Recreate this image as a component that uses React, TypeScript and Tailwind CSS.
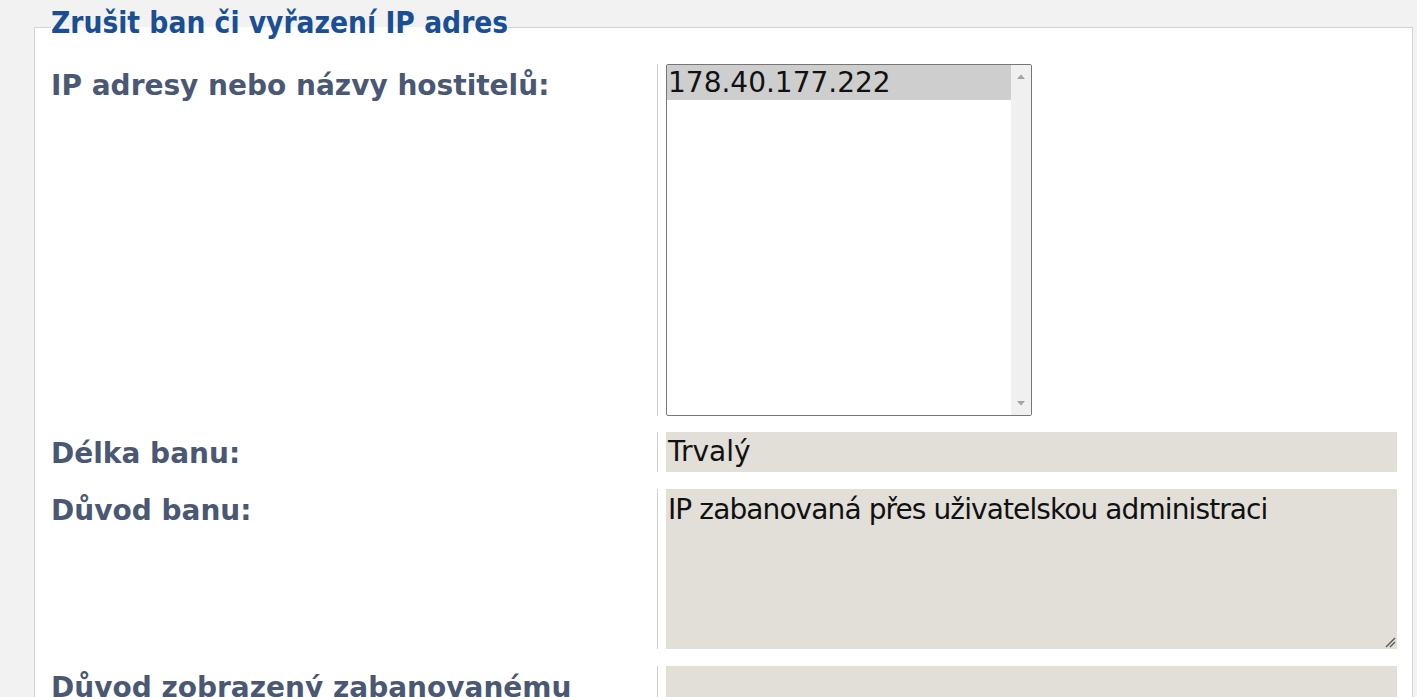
import React from "react";

const labelCls = "pt-[4px] text-[28px] font-bold leading-[36px] text-[#4a5874] font-['DejaVu_Sans',sans-serif]";
const fieldCell = "border-l border-[#cfcfcf] pl-2";

function ResizeHandle() {
    return (
        <svg width="12" height="12" viewBox="0 0 12 12" className="absolute right-[1px] bottom-[1px]">
            <line x1="2" y1="11" x2="11" y2="2" stroke="#5a5a5a" strokeWidth="1.4" />
            <line x1="6" y1="11" x2="11" y2="6" stroke="#5a5a5a" strokeWidth="1.4" />
        </svg>
    );
}

export default function App() {
    const hosts = ["178.40.177.222"];

    return (
        <div className="h-[697px] overflow-hidden bg-[#f2f2f2] font-['DejaVu_Sans',sans-serif] pt-[6px]">
            <fieldset className="ml-[34px] mr-[4px] border border-[#d4d4d4] bg-white pl-4 pr-[15px] pt-[15px] pb-4">
                <legend className="pb-2 text-[29.6px] font-bold leading-[35px] text-[#1a4f94] font-['DejaVu_Sans_Condensed','DejaVu_Sans',sans-serif] [font-stretch:condensed]">
                    Zrušit ban či vyřazení IP adres
                </legend>

                <div className="flex flex-col">
                    {/* hosts */}
                    <div className="mb-[16px] grid grid-cols-[606px_1fr] items-start">
                        <div className={labelCls}>IP adresy nebo názvy hostitelů:</div>
                        <div className={fieldCell}>
                            <div className="flex h-[352px] w-[366px] overflow-hidden rounded-[2px] border border-[#767676] bg-white">
                                <div className="flex-1">
                                    {hosts.map((h) => (
                                        <div key={h} className="h-[35px] bg-[#cecece] pl-[1px] text-[28px] leading-[36px] text-[#111]">
                                            {h}
                                        </div>
                                    ))}
                                </div>
                                <div className="flex w-[20px] flex-col justify-between bg-[#f0f0f0] py-[9px]">
                                    <svg width="20" height="5" viewBox="0 0 20 5"><polygon points="6,5 14,5 10,0.5" fill="#a3a3a3" /></svg>
                                    <svg width="20" height="5" viewBox="0 0 20 5"><polygon points="6,0 14,0 10,4.5" fill="#a3a3a3" /></svg>
                                </div>
                            </div>
                        </div>
                    </div>

                    {/* length */}
                    <div className="mb-[17px] grid grid-cols-[606px_1fr] items-start">
                        <div className={labelCls}>Délka banu:</div>
                        <div className={fieldCell}>
                            <div className="h-[40px] bg-[#e2ded8] pl-[2px] text-[28px] leading-[40px] text-[#111]">Trvalý</div>
                        </div>
                    </div>

                    {/* reason */}
                    <div className="mb-[17px] grid grid-cols-[606px_1fr] items-start">
                        <div className={labelCls}>Důvod banu:</div>
                        <div className={fieldCell}>
                            <div className="relative h-[160px] bg-[#e2ded8] pl-[2px] pt-[2px] text-[28px] leading-[37px] tracking-[-0.9px] text-[#111]">
                                IP zabanovaná přes uživatelskou administraci
                                <ResizeHandle />
                            </div>
                        </div>
                    </div>

                    {/* shown reason */}
                    <div className="grid grid-cols-[606px_1fr] items-start">
                        <div className={labelCls}>Důvod zobrazený zabanovanému uživateli:</div>
                        <div className={fieldCell}>
                            <div className="relative h-[160px] bg-[#e2ded8]" />
                        </div>
                    </div>
                </div>
            </fieldset>
        </div>
    );
}
